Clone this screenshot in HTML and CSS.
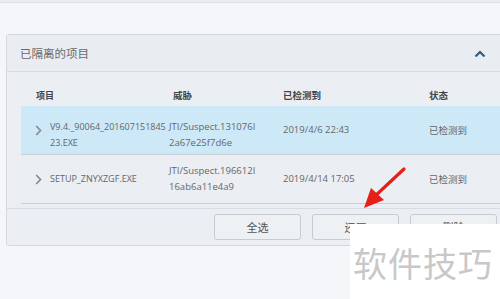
FILE: index.html
```
<!DOCTYPE html>
<html lang="zh">
<head>
<meta charset="UTF-8">
<title>已隔离的项目</title>
<link rel="stylesheet" href="styles.css">
</head>
<body>
<div class="topbar"></div>

<section class="panel">
  <header class="panel-head">
    <span class="panel-title">已隔离的项目</span>
    <svg class="collapse" width="12" height="8" viewBox="0 0 12 8"><path d="M1.5 6.5 L6 2 L10.5 6.5" fill="none" stroke="#2d5f88" stroke-width="2.2"/></svg>
  </header>

  <div class="table">
    <div class="row head">
      <div class="c-item">项目</div>
      <div class="c-threat">威胁</div>
      <div class="c-date">已检测到</div>
      <div class="c-state">状态</div>
    </div>

    <div class="row item selected">
      <div class="c-item">
        <svg class="expand" width="7" height="11" viewBox="0 0 7 11"><path d="M1.2 1 L5.5 5.5 L1.2 10" fill="none" stroke="#8a8f95" stroke-width="1.8"/></svg>
        <span>V9.4._90064_201607151845<br>23.EXE</span>
      </div>
      <div class="c-threat">JTI/Suspect.131076I<br>2a67e25f7d6e</div>
      <div class="c-date">2019/4/6 22:43</div>
      <div class="c-state">已检测到</div>
    </div>

    <div class="row item">
      <div class="c-item">
        <svg class="expand" width="7" height="11" viewBox="0 0 7 11"><path d="M1.2 1 L5.5 5.5 L1.2 10" fill="none" stroke="#8a8f95" stroke-width="1.8"/></svg>
        <span>SETUP_ZNYXZGF.EXE</span>
      </div>
      <div class="c-threat">JTI/Suspect.196612I<br>16ab6a11e4a9</div>
      <div class="c-date">2019/4/14 17:05</div>
      <div class="c-state">已检测到</div>
    </div>
  </div>

  <footer class="panel-foot">
    <button class="btn">全选</button>
    <button class="btn">还原</button>
    <button class="btn">删除</button>
  </footer>
</section>

<svg class="arrow" width="50" height="50" viewBox="0 0 50 50">
  <path d="M44 4 L14 32" stroke="#e5201b" stroke-width="3.2" stroke-linecap="round"/>
  <path d="M4 43 L11 23 L24 35 Z" fill="#e5201b"/>
</svg>

<div class="watermark">软件技巧</div>
</body>
</html>
```

FILE: styles.css
```
* { margin: 0; padding: 0; box-sizing: border-box; }

body {
  background: #f4f6f9;
  font-family: 'Open Sans', 'Noto Sans CJK SC', sans-serif;
  color: #555;
  width: 500px;
  height: 299px;
  overflow: hidden;
  position: relative;
}

.topbar {
  height: 3px;
  background: #e9edf1;
  border-bottom: 1px solid #dde2e7;
}

/* Panel */
.panel {
  margin: 31px -10px 0 6px;
  border: 1px solid #d3d9df;
  border-radius: 3px;
  background: #ebeef2;
}

.panel-head {
  height: 37px;
  display: flex;
  align-items: center;
  justify-content: space-between;
  padding: 0 23px 0 13px;
  background: #e9edf1;
  border-bottom: 1px solid #d6dce2;
}

.panel-title {
  font-family: 'Noto Sans CJK SC', sans-serif;
  font-size: 11.5px;
  color: #6a6a6a;
}

.collapse { margin-top: 1px; }

/* Table */
.table {
  padding-left: 14px;
  border-bottom: 1px solid #d6dce2;
  padding-bottom: 4px;
}

.row {
  display: grid;
  grid-template-columns: 148px 114px 146px 1fr;
  align-items: center;
  font-size: 9.5px;
  color: #666;
}

.row.head {
  height: 34px;
  padding-top: 12px;
  font-family: 'Noto Sans CJK SC', sans-serif;
  font-weight: 700;
  font-size: 9.5px;
  color: #444;
}
.row.head .c-item { padding-left: 15px; }
.row.head .c-threat { padding-left: 4px; }

.row.item {
  height: 49px;
  border-bottom: 1px solid #c9ced4;
  line-height: 16px;
}
.row.selected { background: #cde9f8; }

.c-item {
  display: flex;
  align-items: center;
  gap: 8px;
  padding-left: 14px;
  font-size: 9px;
}

.row.selected .c-item span,
.row.selected .c-threat { padding-top: 10px; }

.c-state {
  font-family: 'Noto Sans CJK SC', sans-serif;
  font-size: 9.5px;
}

/* Footer */
.panel-foot {
  height: 36px;
  display: flex;
  align-items: center;
  gap: 11px;
  padding-left: 207px;
}

.btn {
  width: 87px;
  height: 26px;
  background: #eef1f4;
  border: 1px solid #c7ccd2;
  border-radius: 3px;
  font-family: 'Noto Sans CJK SC', sans-serif;
  font-size: 11px;
  color: #555;
}

/* overlays */
.arrow {
  position: absolute;
  left: 360px;
  top: 165px;
}

.watermark {
  position: absolute;
  left: 350px;
  top: 224px;
  width: 150px;
  height: 75px;
  background: #fff;
  font-family: 'Noto Sans CJK SC', sans-serif;
  font-size: 34px;
  color: #c8c8c8;
  padding: 22px 0 0 3px;
  letter-spacing: 1px;
  line-height: 1;
}
```
